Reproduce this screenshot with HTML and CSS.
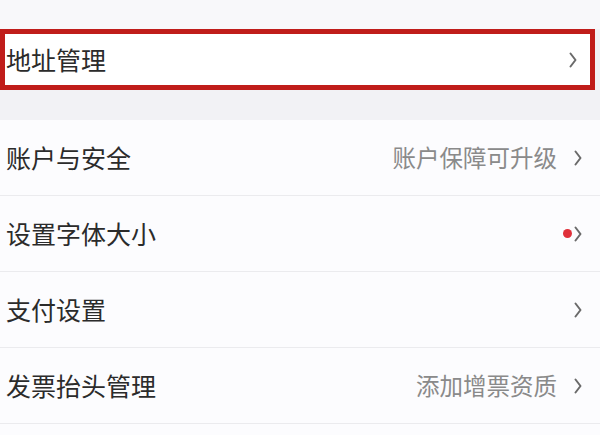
FILE: index.html
```html
<!DOCTYPE html>
<html lang="zh-CN">
<head>
    <meta charset="UTF-8">
    <meta name="viewport" content="width=device-width, initial-scale=1.0">
    <title>设置</title>
    <link rel="stylesheet" href="styles.css">
</head>
<body>
    <div class="page">
        <div class="address-card">
            <div class="row highlight">
                <span class="label">地址管理</span>
                <svg class="chevron" viewBox="0 0 8 16"><polyline points="1.5,1.5 6.5,8 1.5,14.5"/></svg>
            </div>
        </div>

        <div class="list">
            <div class="row">
                <span class="label">账户与安全</span>
                <span class="extra">账户保障可升级</span>
                <svg class="chevron" viewBox="0 0 8 16"><polyline points="1.5,1.5 6.5,8 1.5,14.5"/></svg>
            </div>
            <div class="row">
                <span class="label">设置字体大小</span>
                <span class="dot"></span>
                <svg class="chevron" viewBox="0 0 8 16"><polyline points="1.5,1.5 6.5,8 1.5,14.5"/></svg>
            </div>
            <div class="row">
                <span class="label">支付设置</span>
                <svg class="chevron" viewBox="0 0 8 16"><polyline points="1.5,1.5 6.5,8 1.5,14.5"/></svg>
            </div>
            <div class="row">
                <span class="label">发票抬头管理</span>
                <span class="extra">添加增票资质</span>
                <svg class="chevron" viewBox="0 0 8 16"><polyline points="1.5,1.5 6.5,8 1.5,14.5"/></svg>
            </div>
            <div class="tail"></div>
        </div>
    </div>
</body>
</html>
```

FILE: styles.css
```css
* {
    margin: 0;
    padding: 0;
    box-sizing: border-box;
    font-family: "Noto Sans CJK SC", "Noto Sans", sans-serif;
}

body {
    background: #f3f3f6;
    width: 600px;
    height: 435px;
    overflow: hidden;
}

.page {
    padding-top: 29px;
    background: linear-gradient(#f8f8fa 0, #f8f8fa 29px, #f2f2f5 29px);
}

.address-card {
    width: 595px;
    background: #fff;
    border: 5px solid #c01d1a;
    margin-bottom: 30px;
}

.row {
    display: flex;
    align-items: center;
    height: 76px;
    padding: 0 18px 0 6px;
    border-bottom: 1px solid #ebebee;
}

.row.highlight {
    height: 51px;
    padding: 0 13px 0 1px;
    border-bottom: none;
}

.list {
    background: #fcfcfe;
}

.tail {
    height: 11px;
}

.label {
    flex: 1;
    font-size: 25px;
    color: #2b2b2b;
    line-height: 1;
}

.extra {
    font-size: 23.5px;
    color: #8a8a8a;
    margin-right: 17px;
    line-height: 1;
}

.dot {
    width: 9px;
    height: 9px;
    border-radius: 50%;
    background: #e0303a;
    margin-right: 2px;
}

.chevron {
    width: 8px;
    height: 16px;
    fill: none;
    stroke: #6a6a6a;
    stroke-width: 2;
    stroke-linecap: round;
    stroke-linejoin: round;
}
```
